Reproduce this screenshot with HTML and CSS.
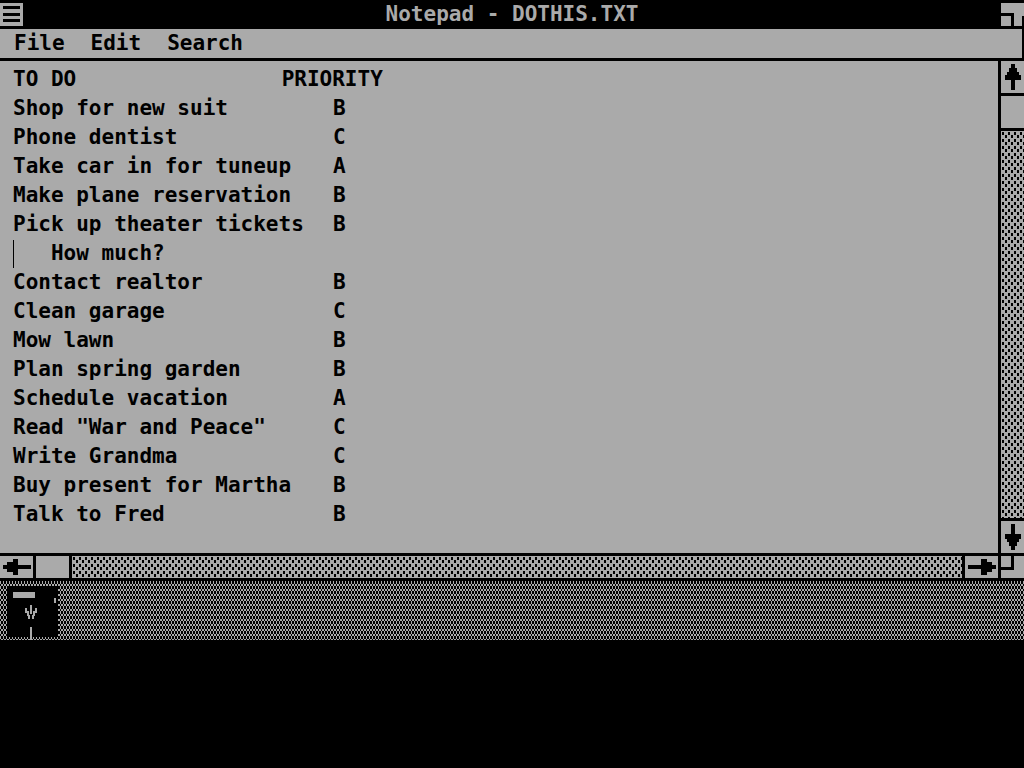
FILE: index.html
```html
<!DOCTYPE html>
<html lang="en">
<head>
    <meta charset="UTF-8">
    <meta name="viewport" content="width=device-width, initial-scale=1.0">
    <title>Notepad - DOTHIS.TXT</title>
    <link rel="stylesheet" href="styles.css">
</head>
<body>
    <main class="window">
        <header class="title-bar">
            <button class="box-button" type="button" aria-label="System menu">
                <svg width="23" height="23" viewBox="0 0 23 23" shape-rendering="crispEdges">
                    <path fill="#aaa" d="M0 0h23v23H0z"/>
                    <path d="M3 3h17v3H3zM3 10h17v3H3zM3 16h17v3H3z"/>
                </svg>
            </button>
            <h1 class="title">Notepad - DOTHIS.TXT</h1>
            <button class="box-button" type="button" aria-label="Size box">
                <svg width="23" height="23" viewBox="0 0 23 23" shape-rendering="crispEdges">
                    <path fill="#aaa" d="M0 0h23v23H0z"/>
                    <path d="M0 10h13v13h-3V13H0zM21 13h2v10h-2z"/>
                </svg>
            </button>
        </header>

        <nav class="menu-bar">
            <button class="menu-item" type="button">File</button>
            <button class="menu-item" type="button">Edit</button>
            <button class="menu-item" type="button">Search</button>
        </nav>

        <section class="work-area">
            <div class="editor">
                <textarea class="text" aria-label="Document text" spellcheck="false">TO DO &#9;&#9;&#9; PRIORITY
Shop for new suit&#9;&#9;B
Phone dentist&#9;&#9;&#9;C
Take car in for tuneup&#9;A
Make plane reservation&#9;B
Pick up theater tickets&#9;B
   How much?
Contact realtor &#9;&#9;B
Clean garage&#9;&#9;&#9;C
Mow lawn&#9;&#9;&#9;&#9;B
Plan spring garden&#9;&#9;B
Schedule vacation&#9;&#9;A
Read "War and Peace" &#9;C
Write Grandma&#9;&#9;&#9;C
Buy present for Martha&#9;B
Talk to Fred&#9;&#9;&#9;B</textarea>
                <span class="caret"></span>
            </div>

            <div class="scroll-v">
                <button class="arrow" type="button" aria-label="Scroll up">
                    <svg width="16" height="26" viewBox="0 0 16 26" shape-rendering="crispEdges">
                        <path d="M6 0h4v4h2v4h2v3h2v5h-6v10H6V16H0v-5h2V8h2V4h2z"/>
                    </svg>
                </button>
                <div class="thumb"></div>
                <div class="track"></div>
                <button class="arrow last" type="button" aria-label="Scroll down">
                    <svg width="16" height="26" viewBox="0 0 16 26" shape-rendering="crispEdges">
                        <path d="M6 26h4v-4h2v-4h2v-3h2v-5h-6V0H6v10H0v5h2v3h2v4h2z"/>
                    </svg>
                </button>
            </div>

            <div class="scroll-h">
                <button class="arrow" type="button" aria-label="Scroll left">
                    <svg width="28" height="16" viewBox="0 0 28 16" shape-rendering="crispEdges">
                        <path d="M0 6h4V3h6V0h5v6h13v4H15v6h-5v-3H4v-3H0z"/>
                    </svg>
                </button>
                <div class="thumb"></div>
                <div class="track"></div>
                <button class="arrow last" type="button" aria-label="Scroll right">
                    <svg width="28" height="16" viewBox="0 0 28 16" shape-rendering="crispEdges">
                        <path d="M28 6h-4V3h-5V0h-6v6H0v4h13v6h6v-3h5v-3h4z"/>
                    </svg>
                </button>
            </div>

            <div class="corner">
                <svg width="23" height="22" viewBox="0 0 23 22" shape-rendering="crispEdges">
                    <path d="M10 0h3v14H0v-3h10z"/>
                </svg>
            </div>
        </section>
    </main>

    <footer class="icon-area">
        <button class="disk" type="button" aria-label="MS-DOS Executive">
            <svg width="51" height="54" viewBox="0 0 51 54" shape-rendering="crispEdges">
                <path d="M0 0h51v51H0z"/>
                <path fill="#aaa" d="M6 6h22v6H6zM23 41h2v13h-2zM47 12h2v5h-2z"/>
                <path fill="#aaa" d="M23 19h2v5h-2zM18 22h2v5h-2zM28 22h2v5h-2zM20 25h2v5h-2zM26 25h2v5h-2zM23 24h2v4h-2zM21 29h2v4h-2zM25 29h2v4h-2z"/>
            </svg>
        </button>
    </footer>
</body>
</html>
```
FILE: styles.css
```css
* {
    box-sizing: border-box;
}

body {
    margin: 0;
    height: 100vh;
    display: flex;
    flex-direction: column;
    background: #000;
    color: #000;
    font-family: "DejaVu Sans Mono", monospace;
    font-size: 21px;
    font-weight: bold;
    line-height: 29px;
    overflow: hidden;
}

button {
    margin: 0;
    padding: 0;
    border: 0;
    background: none;
    color: inherit;
    font: inherit;
}

svg {
    display: block;
}

.window {
    flex: 1;
    min-height: 0;
    display: flex;
    flex-direction: column;
    background: #aaa;
}

/* Title and menu */
.title-bar {
    display: flex;
    justify-content: space-between;
    align-items: center;
    height: 29px;
    background: #000;
    color: #aaa;
}

.title {
    margin: 0;
    font-size: 21px;
    line-height: 29px;
}

.menu-bar {
    display: flex;
    gap: 26px;
    height: 32px;
    padding-left: 14px;
    border-right: 2px solid #000;
    border-bottom: 3px solid #000;
}

/* Text and scroll bars */
.work-area {
    flex: 1;
    min-height: 0;
    display: grid;
    grid-template-columns: 1fr 26px;
    grid-template-rows: 1fr 28px;
}

.editor {
    position: relative;
}

.text {
    display: block;
    width: 100%;
    height: 100%;
    margin: 0;
    padding: 4px 13px;
    border: 0;
    outline: 0;
    resize: none;
    overflow: hidden;
    background: #aaa;
    color: #000;
    font: inherit;
    white-space: pre;
    tab-size: 64px;
}

.caret {
    position: absolute;
    left: 13px;
    top: 179px;
    width: 1px;
    height: 28px;
    background: #000;
}

.scroll-v {
    display: flex;
    flex-direction: column;
    border-left: 3px solid #000;
}

.scroll-h {
    display: flex;
    border-top: 3px solid #000;
    border-bottom: 3px solid #000;
}

.arrow {
    display: flex;
    justify-content: center;
    align-items: center;
}

.scroll-v .arrow,
.scroll-v .thumb {
    height: 35px;
    border-bottom: 3px solid #000;
}

.scroll-v .arrow.last {
    border-top: 3px solid #000;
    border-bottom: 0;
}

.scroll-h .arrow,
.scroll-h .thumb {
    width: 36px;
    border-right: 3px solid #000;
}

.scroll-h .arrow.last {
    border-left: 3px solid #000;
    border-right: 0;
}

/* Light dither: two sets of short dashes, staggered */
.track {
    flex: 1;
    background-color: #aaa;
    background-image:
        conic-gradient(from 90deg at 4px 4px, #000 90deg, transparent 0),
        conic-gradient(from 90deg at 4px 4px, #000 90deg, transparent 0);
    background-size: 6px 7px;
    background-position: 0 0, 3px 4px;
}

.corner {
    border: solid #000;
    border-width: 3px 0 3px 3px;
}

/* Bottom strip for minimized programs, dark dither */
.icon-area {
    height: 59px;
    margin-bottom: 128px;
    padding: 5px 7px 0;
    background-color: #000;
    background-image:
        conic-gradient(from 90deg at 1px 3px, #aaa 90deg, transparent 0),
        conic-gradient(from 90deg at 2px 2px, #aaa 90deg, transparent 0);
    background-size: 3px 5px;
    background-position: 0 0, 1px 3px;
}

.disk {
    display: block;
}
```
